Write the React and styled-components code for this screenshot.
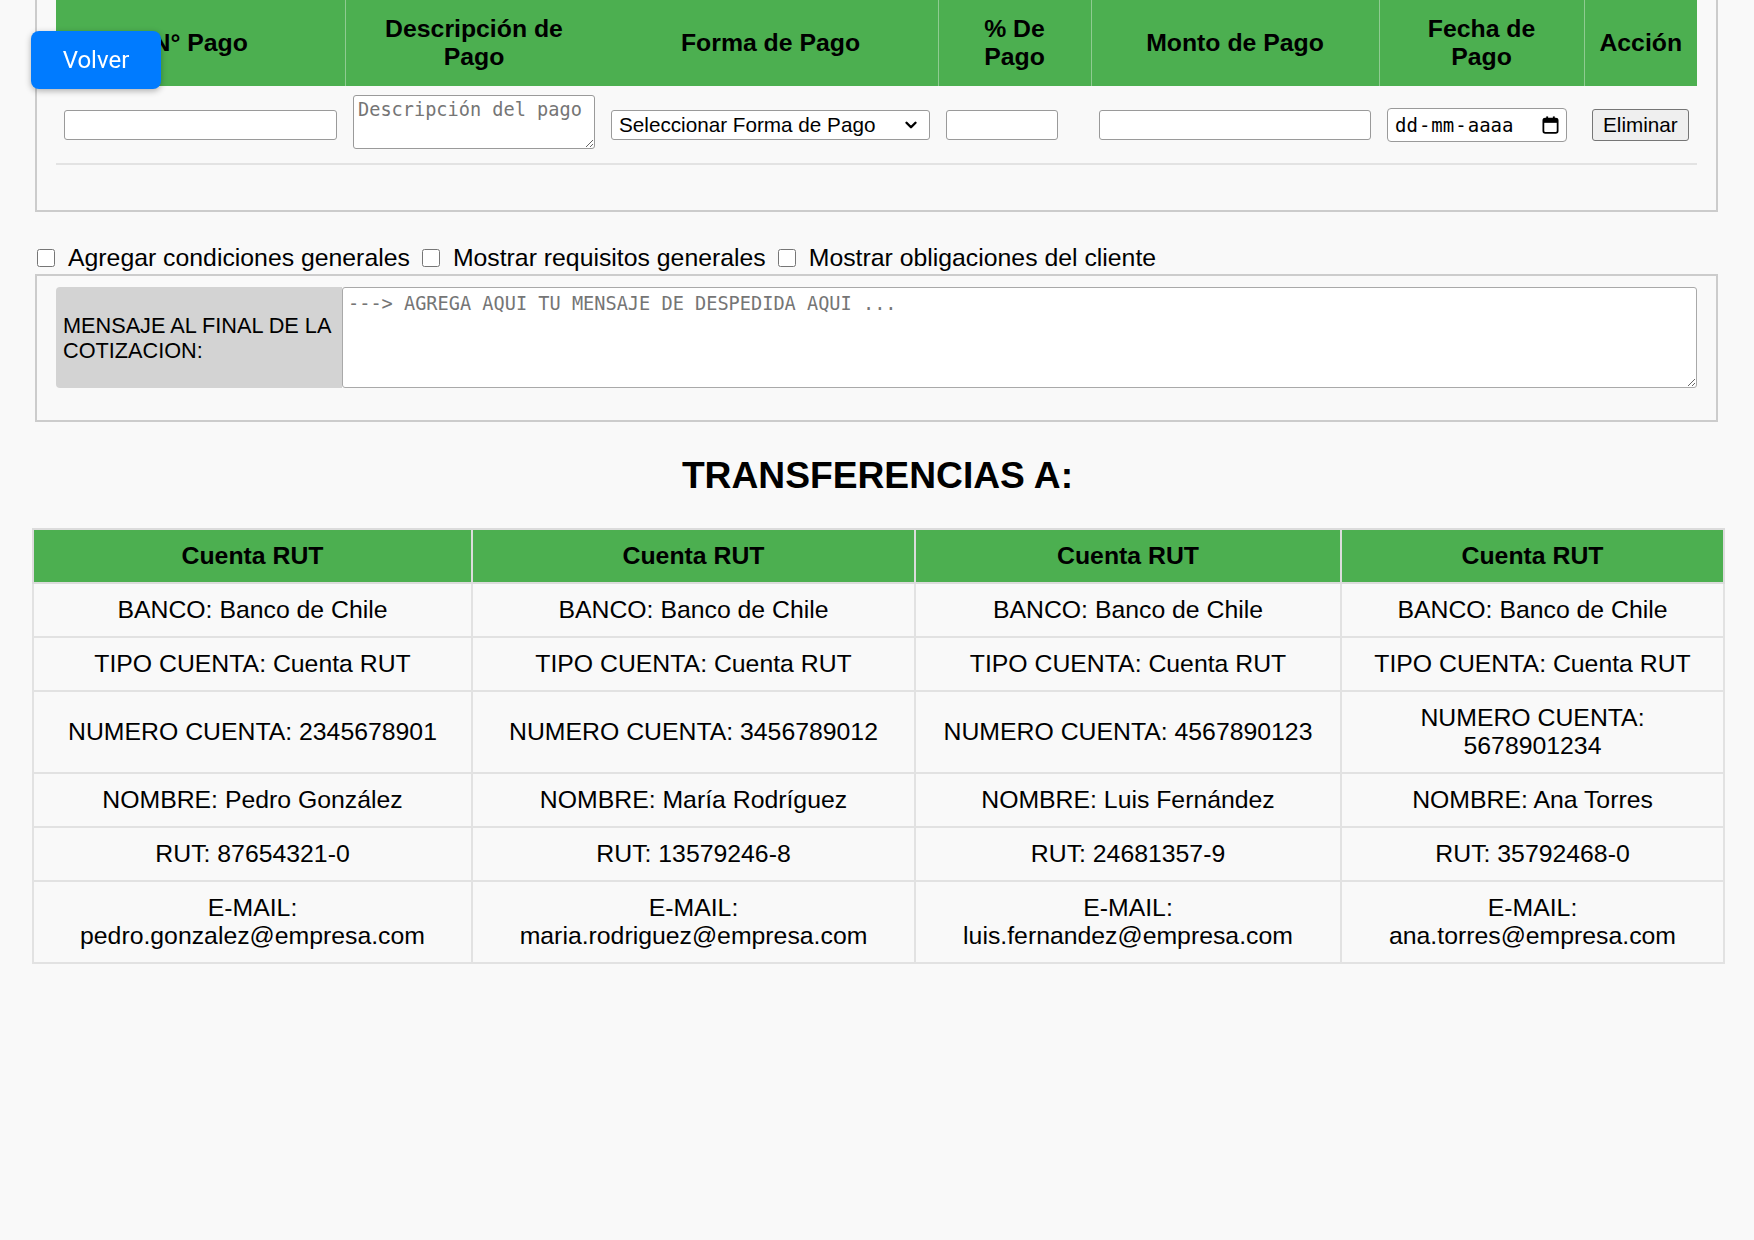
import React from 'react';
import styled, {createGlobalStyle} from 'styled-components';
import {ChevronDown} from 'lucide-react';

const GlobalStyle = createGlobalStyle`
  body {
    margin:           0;
    background-color: #f9f9f9;
    font-family:      "Liberation Sans", Arial, sans-serif;
    color:            #000;
  }
`;

const Page = styled.main`
  padding:          0 31px 80px 32px;
`;

const BackButton = styled.button`
  position:         fixed;
  top:              31px;
  left:             31px;
  width:            130px;
  height:           58px;
  border:           none;
  border-radius:    8px;
  background-color: #007bff;
  color:            white;
  font-family:      Roboto, "Liberation Sans", sans-serif;
  font-size:        24px;
  box-shadow:       0 2px 6px rgba(0, 0, 0, 0.3);
  cursor:           pointer;
  z-index:          10;
`;

const Panel = styled.section`
  margin:           0 5px 0 3px;
  border:           2px solid #ccc;
  border-top:       ${p => p.$cut ? 'none' : '2px solid #ccc'};
  padding:          ${p => p.$pad};
`;

const PayTable = styled.table`
  width:            100%;
  table-layout:     fixed;
  border-collapse:  collapse;
`;

const PayHead = styled.th`
  height:           86px;
  padding:          0 8px;
  background-color: #4caf50;
  border-left:      1px solid ${p => p.$plain ? '#4caf50' : '#8fcb91'};
  font-size:        24.8px;
  font-weight:      bold;
  text-align:       center;
  &:first-child { border-left: none; }
`;

const PayCell = styled.td`
  padding:          9px 8px;
  border-bottom:    2px solid #e3e3e3;
  font-size:        20.7px;
  vertical-align:   middle;
`;

const TextInput = styled.input`
  box-sizing:       border-box;
  width:            ${p => p.$width || '100%'};
  height:           30px;
  border:           1px solid #9a9a9a;
  border-radius:    3px;
  background:       #fff;
  font-family:      "Liberation Sans", Arial, sans-serif;
  font-size:        20.7px;
`;

const SmallArea = styled.textarea`
  box-sizing:       border-box;
  width:            100%;
  height:           54px;
  padding:          3px 4px;
  border:           1px solid #9a9a9a;
  border-radius:    3px;
  background:       #fff;
  font-family:      "DejaVu Sans Mono", monospace;
  font-size:        18.6px;
  &::placeholder { color: #757575; }
`;

const SelectWrap = styled.div`
  position:         relative;
  width:            100%;
  height:           30px;
`;

const PaySelect = styled.select`
  box-sizing:       border-box;
  appearance:       none;
  width:            100%;
  height:           30px;
  padding:          0 30px 0 7px;
  border:           1px solid #9a9a9a;
  border-radius:    3px;
  background:       #fff;
  font-family:      "Liberation Sans", Arial, sans-serif;
  font-size:        20.7px;
  color:            #000;
`;

const SelectArrow = styled(ChevronDown)`
  position:         absolute;
  top:              6px;
  right:            10px;
  pointer-events:   none;
`;

const DateBox = styled.div`
  box-sizing:       border-box;
  display:          flex;
  align-items:      center;
  justify-content:  space-between;
  width:            180px;
  height:           34px;
  padding:          0 6px 0 7px;
  border:           1px solid #9a9a9a;
  border-radius:    4px;
  background:       #fff;
  font-family:      "DejaVu Sans Mono", monospace;
  font-size:        19px;
`;

const DateSep = styled.span`
  margin:           0 1px;
`;

const DeleteButton = styled.button`
  height:           32px;
  padding:          0 10px;
  border:           1px solid #767676;
  border-radius:    3px;
  background-color: #efefef;
  font-family:      "Liberation Sans", Arial, sans-serif;
  font-size:        20.7px;
  color:            #000;
`;

const OptionsRow = styled.div`
  display:          flex;
  align-items:      center;
  margin:           32px 0 2px 5px;
  font-size:        24.8px;
  line-height:      28px;
`;

const Option = styled.label`
  display:          flex;
  align-items:      center;
  gap:              13px;
  margin-right:     12px;
`;

const Check = styled.input`
  width:            18px;
  height:           18px;
  margin:           0;
`;

const MessageRow = styled.div`
  display:          flex;
  height:           101px;
`;

const MessageLabel = styled.div`
  box-sizing:       border-box;
  display:          flex;
  align-items:      center;
  width:            286px;
  padding:          0 7px;
  background-color: #d3d3d3;
  border-radius:    4px 0 0 4px;
  font-size:        21.7px;
  line-height:      25px;
`;

const MessageArea = styled.textarea`
  box-sizing:       border-box;
  flex:             1;
  height:           101px;
  padding:          5px 5px;
  border:           1px solid #a9a9a9;
  border-radius:    3px;
  background:       #fff;
  font-family:      "DejaVu Sans Mono", monospace;
  font-size:        18.6px;
  &::placeholder { color: #757575; }
`;

const Title = styled.h2`
  margin:           32px 0 31px;
  font-size:        37.2px;
  line-height:      43px;
  font-weight:      bold;
  text-align:       center;
`;

const BankTable = styled.table`
  width:            100%;
  table-layout:     fixed;
  border-collapse:  collapse;
  font-size:        24.8px;
`;

const BankHead = styled.th`
  padding:          12px;
  background-color: #4caf50;
  border:           2px solid #dcdcdc;
  font-weight:      bold;
  text-align:       center;
  line-height:      28px;
`;

const BankCell = styled.td`
  padding:          12px;
  border:           2px solid #e2e2e2;
  text-align:       center;
  line-height:      28px;
`;

const CalendarIcon = () => (
  <svg width="19" height="19" viewBox="0 0 16 16">
    <rect x="2" y="3" width="12" height="12" rx="1.6" fill="none" stroke="#000" strokeWidth="1.5"/>
    <rect x="2" y="3" width="12" height="3.6" fill="#000"/>
    <rect x="4.4" y="1.2" width="1.6" height="3" fill="#000"/>
    <rect x="10" y="1.2" width="1.6" height="3" fill="#000"/>
  </svg>
);

const payColumns = [
  {label: 'N° Pago', width: 289},
  {label: <>Descripción de<br/>Pago</>, width: 258},
  {label: 'Forma de Pago', width: 335, plain: true},
  {label: <>% De<br/>Pago</>, width: 153},
  {label: 'Monto de Pago', width: 288},
  {label: <>Fecha de<br/>Pago</>, width: 205},
  {label: 'Acción'},
];

const accounts = [
  {numero: '2345678901', nombre: 'Pedro González', rut: '87654321-0', email: 'pedro.gonzalez@empresa.com'},
  {numero: '3456789012', nombre: 'María Rodríguez', rut: '13579246-8', email: 'maria.rodriguez@empresa.com'},
  {numero: '4567890123', nombre: 'Luis Fernández', rut: '24681357-9', email: 'luis.fernandez@empresa.com'},
  {numero: '5678901234', nombre: 'Ana Torres', rut: '35792468-0', email: 'ana.torres@empresa.com'},
];

const bankWidths = [439, 443, 426, 383];

const bankRows = [
  a => 'BANCO: Banco de Chile',
  a => 'TIPO CUENTA: Cuenta RUT',
  a => `NUMERO CUENTA: ${a.numero}`,
  a => `NOMBRE: ${a.nombre}`,
  a => `RUT: ${a.rut}`,
  a => `E-MAIL: ${a.email}`,
];

export default function App() {
  return (
    <>
      <GlobalStyle/>
      <BackButton>Volver</BackButton>
      <Page>
        <Panel $cut $pad="0 19px 45px">
          <PayTable>
            <colgroup>
              {payColumns.map((c, i) => <col key={i} style={c.width ? {width: c.width} : undefined}/>)}
            </colgroup>
            <thead>
              <tr>
                {payColumns.map((c, i) => <PayHead key={i} $plain={c.plain}>{c.label}</PayHead>)}
              </tr>
            </thead>
            <tbody>
              <tr>
                <PayCell><TextInput type="text"/></PayCell>
                <PayCell><SmallArea placeholder="Descripción del pago"/></PayCell>
                <PayCell>
                  <SelectWrap>
                    <PaySelect defaultValue="">
                      <option value="">Seleccionar Forma de Pago</option>
                      <option value="transferencia">Transferencia</option>
                      <option value="efectivo">Efectivo</option>
                    </PaySelect>
                    <SelectArrow size={18} strokeWidth={3.2} color="#000"/>
                  </SelectWrap>
                </PayCell>
                <PayCell><TextInput type="text" $width="112px"/></PayCell>
                <PayCell><TextInput type="text"/></PayCell>
                <PayCell>
                  <DateBox>
                    <span>dd<DateSep>-</DateSep>mm<DateSep>-</DateSep>aaaa</span>
                    <CalendarIcon/>
                  </DateBox>
                </PayCell>
                <PayCell><DeleteButton>Eliminar</DeleteButton></PayCell>
              </tr>
            </tbody>
          </PayTable>
        </Panel>

        <OptionsRow>
          <Option><Check type="checkbox"/>Agregar condiciones generales</Option>
          <Option><Check type="checkbox"/>Mostrar requisitos generales</Option>
          <Option><Check type="checkbox"/>Mostrar obligaciones del cliente</Option>
        </OptionsRow>

        <Panel $pad="11px 19px 32px">
          <MessageRow>
            <MessageLabel>MENSAJE AL FINAL DE LA COTIZACION:</MessageLabel>
            <MessageArea placeholder="---> AGREGA AQUI TU MENSAJE DE DESPEDIDA AQUI ..."/>
          </MessageRow>
        </Panel>

        <Title>TRANSFERENCIAS A:</Title>

        <BankTable>
          <colgroup>
            {bankWidths.map((w, i) => <col key={i} style={{width: w}}/>)}
          </colgroup>
          <thead>
            <tr>
              {accounts.map((a, i) => <BankHead key={i}>Cuenta RUT</BankHead>)}
            </tr>
          </thead>
          <tbody>
            {bankRows.map((row, r) => (
              <tr key={r}>
                {accounts.map((a, i) => <BankCell key={i}>{row(a)}</BankCell>)}
              </tr>
            ))}
          </tbody>
        </BankTable>
      </Page>
    </>
  );
}
